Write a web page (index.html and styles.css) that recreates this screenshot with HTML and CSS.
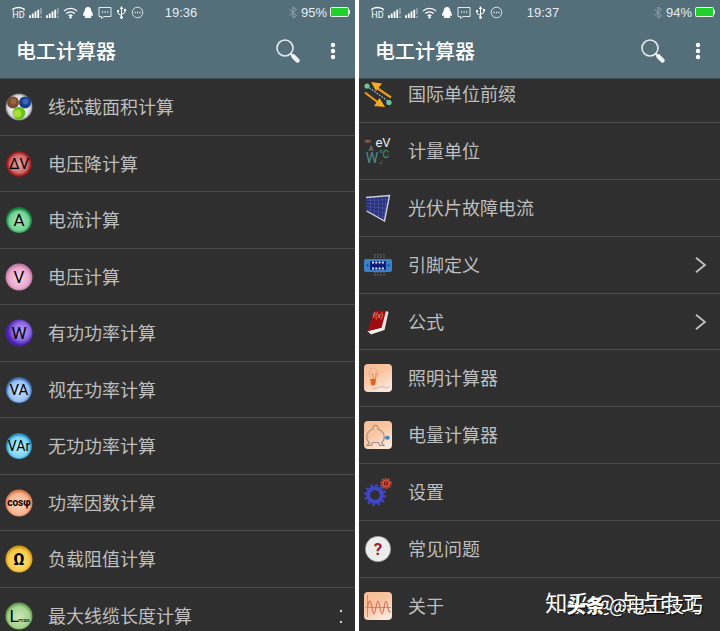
FILE: index.html
```html
<!DOCTYPE html>
<html lang="zh-CN">

<head>
  <meta charset="UTF-8" />
  <meta name="viewport" content="width=device-width, initial-scale=1.0" />
  <title>电工计算器</title>
  <link rel="stylesheet" href="styles.css">
</head>

<body>
  <!-- shared icons -->
  <svg class="sprite" width="0" height="0" aria-hidden="true">
    <defs>
      <radialGradient id="gWhite"><stop offset="0.4" stop-color="#fff" /><stop offset="0.85" stop-color="#d5d5dc" /><stop offset="1" stop-color="#77777d" /></radialGradient>
      <radialGradient id="gRed"><stop offset="0" stop-color="#e9a5a5" /><stop offset="0.7" stop-color="#cd6767" /><stop offset="0.86" stop-color="#a92b2b" /><stop offset="1" stop-color="#7c1212" /></radialGradient>
      <radialGradient id="gGreen" cy="0.54"><stop offset="0" stop-color="#aee8c1" /><stop offset="0.75" stop-color="#72cf91" /><stop offset="1" stop-color="#0c7a37" /></radialGradient>
      <radialGradient id="gPink" cy="0.54"><stop offset="0" stop-color="#f8d3e7" /><stop offset="0.75" stop-color="#eaa8ce" /><stop offset="1" stop-color="#c277a4" /></radialGradient>
      <radialGradient id="gViolet" cx="0.58" cy="0.44"><stop offset="0" stop-color="#b9a4f5" /><stop offset="0.65" stop-color="#8a68e2" /><stop offset="1" stop-color="#4a20ae" /></radialGradient>
      <radialGradient id="gBlue" cy="0.54"><stop offset="0" stop-color="#cfe2ff" /><stop offset="0.78" stop-color="#98bff5" /><stop offset="1" stop-color="#3566ae" /></radialGradient>
      <radialGradient id="gCyan" cy="0.54"><stop offset="0" stop-color="#c4f0ff" /><stop offset="0.78" stop-color="#78d2f3" /><stop offset="1" stop-color="#2086b5" /></radialGradient>
      <radialGradient id="gOrange" cy="0.54"><stop offset="0" stop-color="#ffd2b9" /><stop offset="0.78" stop-color="#f9b592" /><stop offset="1" stop-color="#d5764a" /></radialGradient>
      <radialGradient id="gYellow" cy="0.54"><stop offset="0" stop-color="#ffe58a" /><stop offset="0.78" stop-color="#f9cb48" /><stop offset="1" stop-color="#cf9516" /></radialGradient>
      <radialGradient id="gLime" cy="0.54"><stop offset="0" stop-color="#cbe9b9" /><stop offset="0.78" stop-color="#a4d48d" /><stop offset="1" stop-color="#659c51" /></radialGradient>
      <linearGradient id="gTile" x2="0.6" y2="1"><stop offset="0" stop-color="#f6bc95" /><stop offset="0.5" stop-color="#fac6a1" /><stop offset="1" stop-color="#f9e7db" /></linearGradient>

      <symbol id="signal" viewBox="0 0 14 12">
        <path d="M1 12V9M4 12V7M7 12V5M10 12V3" stroke="#fff" stroke-width="2" />
        <path d="M13 1v7M13 10v2" stroke="#c6d2d7" />
      </symbol>
      <symbol id="wifi" viewBox="0 0 16 13">
        <path d="M1 5a10 10 0 0 1 14 0M3.500 7.600a6.500 6.500 0 0 1 9 0M6 10a3 3 0 0 1 4 0" fill="none" stroke="#fff" stroke-width="1.400" />
        <circle cx="8" cy="11.500" r="1.300" fill="#fff" />
      </symbol>
      <symbol id="qq" viewBox="0 0 12 13">
        <path d="M6 1C3.600 1 2.700 2.700 2.700 5 1.500 6.600.8 8.400 1.200 9.800c.3.600.8.100 1.200-.5.200.7.500 1 .8 1.300-.9.400-.8 1.400.4 1.400h4.800c1.200 0 1.300-1 .4-1.400.3-.3.600-.6.800-1.300.4.600.9 1.100 1.200.5.400-1.400-.3-3.200-1.500-4.800C9.300 2.700 8.400 1 6 1z" fill="#fff" />
      </symbol>
      <symbol id="message" viewBox="0 0 14 13">
        <path d="M1 1.500h12v9H6L3.500 12.500v-2H1z" fill="none" stroke="#dfe8eb" />
        <path d="M4 6h1.200M6.500 6h1.200M9 6h1.200" stroke="#dfe8eb" stroke-width="1.300" />
      </symbol>
      <symbol id="usb" viewBox="0 0 11 13">
        <path d="M5.500 2v9M5.500 9.500 2 7.500V5M5.500 8.500 9 6.500V4" fill="none" stroke="#fff" />
        <path d="M5.500 0 7.300 3H3.700zM1 4h2v2H1z" fill="#fff" />
        <circle cx="9" cy="4" r="1.200" fill="#fff" />
        <circle cx="5.500" cy="11.500" r="1.400" fill="#fff" />
      </symbol>
      <symbol id="face" viewBox="0 0 13 13">
        <circle cx="6.500" cy="6.500" r="5.300" fill="none" stroke="#dfe8eb" />
        <path d="M3.500 6.500h1.300M5.900 6.500h1.300M8.300 6.500h1.300" stroke="#dfe8eb" stroke-width="1.300" />
      </symbol>
      <symbol id="bluetooth" viewBox="0 0 9 13">
        <path d="M1 3.500l7 6L4.500 12V1L8 3.500l-7 6" fill="none" stroke="#93a5ae" />
      </symbol>
      <symbol id="battery" viewBox="0 0 20 12">
        <rect x="0.500" y="1.500" width="18" height="9" rx="1" fill="#1fd12a" stroke="#e9f3ea" />
        <path d="M19.500 4v4" stroke="#e9f3ea" />
      </symbol>
      <symbol id="search" viewBox="0 0 26 26">
        <circle cx="10" cy="10" r="8" fill="none" stroke="#e3eaed" stroke-width="1.600" />
        <path d="M15.500 15.500l3 3" stroke="#f1f5f6" stroke-width="2" />
        <path d="M18.500 18.500l4 4" stroke="#f1f5f6" stroke-width="4.500" stroke-linecap="round" />
      </symbol>
      <symbol id="more" viewBox="0 0 6 18">
        <circle cx="3" cy="3" r="2.200" fill="#fff" />
        <circle cx="3" cy="9" r="2.200" fill="#fff" />
        <circle cx="3" cy="15" r="2.200" fill="#fff" />
      </symbol>
      <symbol id="chevron" viewBox="0 0 12 18">
        <path d="M1.500 2.500l8 6.500-8 6.500" fill="none" stroke="#bebebe" stroke-width="1.700" />
      </symbol>
    </defs>
  </svg>

  <main class="screens">
    <section class="phone">
      <header class="top">
        <div class="status">
          <div class="status-icons">
            <svg class="hd" viewBox="0 0 13 13"><path d="M1 4.500V3Q6.500 0 12 3v1.500" fill="none" stroke="#fff" stroke-width="1.400" /><text x="6.500" y="12" font-size="9">HD</text></svg>
            <svg class="signal"><use href="#signal" /></svg>
            <svg class="signal"><use href="#signal" /></svg>
            <svg class="wifi"><use href="#wifi" /></svg>
            <svg class="qq"><use href="#qq" /></svg>
            <svg class="message"><use href="#message" /></svg>
            <svg class="usb"><use href="#usb" /></svg>
            <svg class="face"><use href="#face" /></svg>
          </div>
          <time>19:36</time>
          <div class="power">
            <svg class="bluetooth"><use href="#bluetooth" /></svg>
            <span>95%</span>
            <svg class="battery"><use href="#battery" /></svg>
          </div>
        </div>
        <div class="toolbar">
          <h1>电工计算器</h1>
          <button type="button" aria-label="搜索"><svg class="search"><use href="#search" /></svg></button>
          <button type="button" aria-label="更多"><svg class="more"><use href="#more" /></svg></button>
        </div>
      </header>
      <nav class="list">
        <a href="#">
          <svg class="icon" viewBox="0 0 28 28">
            <circle cx="14" cy="14" r="13.500" fill="url(#gWhite)" />
            <circle cx="8" cy="9.500" r="6" fill="#7a4a2e" /><circle cx="8.500" cy="8.500" r="3" fill="#94664a" />
            <circle cx="20" cy="9.500" r="6" fill="#163f90" /><circle cx="20.500" cy="8.500" r="3" fill="#3a66b4" />
            <circle cx="14" cy="20" r="6.300" fill="#62c41d" /><circle cx="12.500" cy="20.500" r="3.800" fill="#a9e033" />
          </svg>
          <span>线芯截面积计算</span>
        </a>
        <a href="#">
          <svg class="icon" viewBox="0 0 28 28"><circle cx="14" cy="14" r="13" fill="url(#gRed)" /><text x="14" y="19" font-size="15">ΔV</text></svg>
          <span>电压降计算</span>
        </a>
        <a href="#">
          <svg class="icon" viewBox="0 0 28 28"><circle cx="14" cy="14" r="13" fill="url(#gGreen)" /><text x="14" y="20" font-size="17">A</text></svg>
          <span>电流计算</span>
        </a>
        <a href="#">
          <svg class="icon" viewBox="0 0 28 28"><circle cx="14" cy="14" r="13.500" fill="url(#gPink)" /><text x="14" y="20" font-size="17">V</text></svg>
          <span>电压计算</span>
        </a>
        <a href="#">
          <svg class="icon" viewBox="0 0 28 28"><circle cx="14" cy="14" r="13.500" fill="url(#gViolet)" /><text x="14" y="20" font-size="17">W</text></svg>
          <span>有功功率计算</span>
        </a>
        <a href="#">
          <svg class="icon" viewBox="0 0 28 28"><circle cx="14" cy="14" r="13" fill="url(#gBlue)" /><text x="14" y="19" font-size="15">VA</text></svg>
          <span>视在功率计算</span>
        </a>
        <a href="#">
          <svg class="icon" viewBox="0 0 28 28"><circle cx="14" cy="14" r="13" fill="url(#gCyan)" /><text x="14" y="19" font-size="14">VAr</text></svg>
          <span>无功功率计算</span>
        </a>
        <a href="#">
          <svg class="icon" viewBox="0 0 28 28"><circle cx="14" cy="14" r="13.500" fill="url(#gOrange)" /><text x="14" y="17" font-size="10" font-weight="bold">cosφ</text></svg>
          <span>功率因数计算</span>
        </a>
        <a href="#">
          <svg class="icon" viewBox="0 0 28 28"><circle cx="14" cy="14" r="13.500" fill="url(#gYellow)" /><text x="14" y="20" font-size="17" font-weight="bold">Ω</text></svg>
          <span>负载阻值计算</span>
        </a>
        <a href="#">
          <svg class="icon" viewBox="0 0 28 28"><circle cx="14" cy="14" r="13.500" fill="url(#gLime)" /><text x="9" y="20" font-size="17">L</text><text x="19" y="20" font-size="6">max</text></svg>
          <span>最大线缆长度计算</span>
          <svg class="row-dots" viewBox="0 0 4 14"><circle cx="2" cy="2" r="1.200" fill="#ccc" /><circle cx="2" cy="13" r="1.200" fill="#ccc" /></svg>
        </a>
      </nav>
    </section>

    <section class="phone">
      <header class="top">
        <div class="status">
          <div class="status-icons">
            <svg class="hd" viewBox="0 0 13 13"><path d="M1 4.500V3Q6.500 0 12 3v1.500" fill="none" stroke="#fff" stroke-width="1.400" /><text x="6.500" y="12" font-size="9">HD</text></svg>
            <svg class="signal"><use href="#signal" /></svg>
            <svg class="signal"><use href="#signal" /></svg>
            <svg class="wifi"><use href="#wifi" /></svg>
            <svg class="qq"><use href="#qq" /></svg>
            <svg class="message"><use href="#message" /></svg>
            <svg class="usb"><use href="#usb" /></svg>
            <svg class="face"><use href="#face" /></svg>
          </div>
          <time>19:37</time>
          <div class="power">
            <svg class="bluetooth"><use href="#bluetooth" /></svg>
            <span>94%</span>
            <svg class="battery"><use href="#battery" /></svg>
          </div>
        </div>
        <div class="toolbar">
          <h1>电工计算器</h1>
          <button type="button" aria-label="搜索"><svg class="search"><use href="#search" /></svg></button>
          <button type="button" aria-label="更多"><svg class="more"><use href="#more" /></svg></button>
        </div>
      </header>
      <nav class="list scrolled">
        <a href="#">
          <svg class="icon" viewBox="0 0 28 28">
            <path d="M3 6l22 16" stroke="#a9c9d8" stroke-width="1.200" stroke-dasharray="1.500 1.500" />
            <path d="M13 8l14 9.500M1 12.500l13 10" stroke="#e99a17" stroke-width="2.200" />
            <path d="M7 2l11 1.500-6 7.500zM21 27l-11-1 5.500-8z" fill="#f9ab20" />
            <circle cx="3" cy="6" r="2.600" fill="#6cc79b" /><circle cx="25" cy="22.500" r="2.600" fill="#6cc79b" />
          </svg>
          <span>国际单位前缀</span>
        </a>
        <a href="#">
          <svg class="icon" viewBox="0 0 28 28">
            <text x="4" y="6" font-size="6" fill="#aaa">m</text>
            <text x="19" y="10" font-size="13" fill="#eee">eV</text>
            <text x="7" y="14" font-size="7" fill="#999">A</text>
            <text x="8" y="26" font-size="14" fill="#4f8d8b">W</text>
            <text x="20" y="21" font-size="10" fill="#3aa285">°C</text>
            <text x="17" y="27" font-size="5" fill="#777">J</text>
          </svg>
          <span>计量单位</span>
        </a>
        <a href="#">
          <svg class="icon" viewBox="0 0 28 28">
            <path d="M2 3.500 25.500 1.500 20.500 27 2.500 17z" fill="#27307d" />
            <path d="M2 6.500l23-1M2 9.500l22.300.5M2.300 12.500l21 2M2.500 15.300l20 4M2.500 17l18.500 6.500M6.500 3v16M10.500 3v18M14.500 2.500v21M18.500 2v23.500M22 2l-1.500 22" fill="none" stroke="#5865a8" stroke-width="0.500" />
            <path d="M2 3.500 25.500 1.500 20.500 27 2.500 17" fill="none" stroke="#cfd0da" stroke-width="1.400" />
          </svg>
          <span>光伏片故障电流</span>
        </a>
        <a href="#">
          <svg class="icon" viewBox="0 0 28 28">
            <path d="M11 3v22M14 3v22M17 3v22M20 3v22" stroke="#737d8f" stroke-dasharray="1.500 1" />
            <rect x="0" y="8" width="28" height="13" rx="2" fill="#3a7fc8" />
            <circle cx="3.500" cy="14.500" r="1" fill="#123f85" /><circle cx="24.500" cy="14.500" r="1" fill="#123f85" />
            <rect x="6" y="10" width="16" height="9" rx="1" fill="#101c80" />
            <path d="M8 11.500h13M8 17.500h13" stroke="#dbe4ff" stroke-width="2" stroke-dasharray="2 1.300" />
          </svg>
          <span>引脚定义</span>
          <svg class="chevron"><use href="#chevron" /></svg>
        </a>
        <a href="#">
          <svg class="icon" viewBox="0 0 28 28">
            <path d="M22 3l2.500 1-4 18L7 26.500 3.500 23z" fill="#f2e3df" />
            <path d="M10 2.500 22 3 17.500 20 3.500 23.500z" fill="#9e0c10" />
            <path d="M3.500 23.500 17.500 20l1 1.500L7 25z" fill="#fff" />
            <text x="14" y="10" font-size="7" font-style="italic" fill="#f0b2ad">f(x)</text>
          </svg>
          <span>公式</span>
          <svg class="chevron"><use href="#chevron" /></svg>
        </a>
        <a href="#">
          <svg class="icon" viewBox="0 0 28 28">
            <rect width="28" height="28" rx="4" fill="url(#gTile)" />
            <path d="M7 14C3 9 6 4 9.500 4s6.500 5 3 10" fill="none" stroke="#e9ab82" />
            <path d="M8 9l1.500 6M12.500 8.500 11 15" stroke="#e08a4d" />
            <path d="M6 15h6l-.7 5.500q-2.300 2-4.300 0z" fill="#df641f" />
            <path d="M8 24c4 3 7-3 12-1 3 2 5 1 6-1" fill="none" stroke="#c8aaa0" stroke-width="0.800" />
          </svg>
          <span>照明计算器</span>
        </a>
        <a href="#">
          <svg class="icon" viewBox="0 0 28 28">
            <rect width="28" height="28" rx="4" fill="url(#gTile)" />
            <path d="M9 8c-1-5 6-5 5 0 5 1.500 7 6 6 10-.5 2-1.500 3-2.500 4l2.500 2.500h-4.500l-1-3M9 8c-5 1.500-7 6-6 10 .5 2 1.500 3 2.500 4L3 24.500h4.500l1-3M8.500 21.500h6" fill="none" stroke="#a38d86" stroke-width="1.100" />
            <path d="M20 17h2" stroke="#79838e" /><rect x="21.500" y="15" width="4" height="3.500" rx="1" fill="#477eae" />
          </svg>
          <span>电量计算器</span>
        </a>
        <a href="#">
          <svg class="icon" viewBox="0 0 28 28">
            <circle cx="11" cy="17" r="6.800" fill="none" stroke="#4045c9" stroke-width="4" />
            <circle cx="11" cy="17" r="9.700" fill="none" stroke="#4045c9" stroke-width="2.400" stroke-dasharray="2.600 2.480" />
            <circle cx="22" cy="5.500" r="3.200" fill="#4b0e0b" stroke="#cf4a3d" stroke-width="2.200" />
            <circle cx="22" cy="5.500" r="5" fill="none" stroke="#cf4a3d" stroke-width="1.500" stroke-dasharray="1.600 1.540" />
            <circle cx="22" cy="5.500" r="1.200" fill="#d83a2f" />
          </svg>
          <span>设置</span>
        </a>
        <a href="#">
          <svg class="icon" viewBox="0 0 28 28"><circle cx="14" cy="14" r="12.700" fill="#ececec" stroke="#8a8a8a" stroke-width="0.600" /><text x="14" y="20" font-size="17" font-weight="bold" fill="#981c2c">?</text></svg>
          <span>常见问题</span>
        </a>
        <a href="#">
          <svg class="icon" viewBox="0 0 28 28">
            <rect width="28" height="28" rx="4" fill="url(#gTile)" />
            <path d="M3.500 3v22M1 15.500h26" stroke="#e5796a" stroke-width="0.900" />
            <path d="M3.500 15.500C5 7 6.500 7 8 15.500s2.500 8 4 0 2.500-8.500 4 0 2.500 8 4 0 2.500-8.500 4 0c.7 4 1.500 5 2.500 4" fill="none" stroke="#dc6655" stroke-width="1.100" />
          </svg>
          <span>关于</span>
        </a>
      </nav>
      <div class="watermark zhihu">知乎 @点点电工</div>
      <div class="watermark toutiao"><b>头条</b> @电工技巧</div>
    </section>
  </main>
</body>

</html>
```

FILE: styles.css
```css
* {
  padding: 0;
  margin: 0;
  box-sizing: border-box;
}

body {
  background: #fff;
  font-family: Roboto, "Noto Sans CJK SC", sans-serif;
}

svg {
  display: block;
  flex-shrink: 0;
}

svg text {
  font-family: Roboto, "Liberation Sans", sans-serif;
  text-anchor: middle;
}

.sprite {
  position: absolute;
}

.screens {
  display: grid;
  grid-template-columns: 355fr 361fr;
  gap: 4px;
  height: 100vh;
}

.phone {
  position: relative;
  display: flex;
  flex-direction: column;
  min-width: 0;
  overflow: hidden;
  background: #2f2f2f;
}

/* status bar + toolbar */
.top {
  position: relative;
  z-index: 1;
  background: #546e7a;
  border-bottom: 1px solid #3d4a50;
  color: #fff;
}

.status {
  display: grid;
  grid-template-columns: 1fr auto 1fr;
  align-items: center;
  height: 24px;
  padding: 0 5px 0 12px;
  font-family: "Liberation Sans", sans-serif;
  font-size: 13px;
}

.status-icons,
.power {
  display: flex;
  align-items: center;
}

.status-icons {
  gap: 4px;
}

.status time {
  color: #e6edf0;
}

.power {
  justify-content: flex-end;
  gap: 3px;
  color: #e6edf0;
}

.hd {
  width: 13px;
  height: 13px;
}

.hd text {
  fill: #fff;
}

.signal {
  width: 13px;
  height: 11px;
}

.wifi {
  width: 15px;
  height: 13px;
}

.qq {
  width: 12px;
  height: 13px;
}

.message {
  width: 14px;
  height: 13px;
}

.usb {
  width: 11px;
  height: 13px;
}

.face {
  width: 13px;
  height: 13px;
}

.bluetooth {
  width: 10px;
  height: 13px;
}

.battery {
  width: 20px;
  height: 12px;
}

.toolbar {
  display: flex;
  align-items: center;
  height: 54px;
  padding: 0 10px 0 16px;
}

.toolbar h1 {
  flex: 1;
  padding-top: 2px;
  font-size: 20px;
  font-weight: 500;
  line-height: 24px;
}

.toolbar button {
  display: flex;
  align-items: center;
  justify-content: center;
  height: 40px;
  border: 0;
  background: none;
  cursor: pointer;
}

.toolbar .search {
  width: 26px;
  height: 26px;
  margin: 0 20px;
}

.toolbar .more {
  width: 6px;
  height: 18px;
  margin: 0 9px;
}

/* menu rows */
.list {
  display: grid;
  grid-auto-rows: 57px 56px;
}

.list.scrolled {
  grid-auto-rows: 57px 57px 57px 57px 56px;
  margin-top: -13px;
}

.list a {
  display: flex;
  align-items: center;
  gap: 15px;
  padding: 0 12px 0 5px;
  border-bottom: 1px solid #4b4b4b;
  color: #bebebe;
  font-size: 18px;
  line-height: 24px;
  text-decoration: none;
}

.list.scrolled a {
  gap: 16px;
}

.list span {
  flex: 1;
  padding-top: 2px;
  white-space: nowrap;
}

.icon {
  width: 28px;
  height: 28px;
}

.chevron {
  width: 14px;
  height: 20px;
}

.row-dots {
  width: 4px;
  height: 14px;
}

/* watermarks */
.watermark {
  position: absolute;
  color: #fff;
  font-family: "Noto Sans CJK SC", sans-serif;
  white-space: pre;
}

.zhihu {
  right: 17px;
  bottom: 18px;
  font-size: 22px;
  line-height: 24px;
}

.toutiao {
  right: 17px;
  bottom: 14px;
  font-size: 19px;
  line-height: 24px;
  text-shadow: 1px 1px 1px #000;
}

.toutiao b {
  font-weight: 900;
}
```
